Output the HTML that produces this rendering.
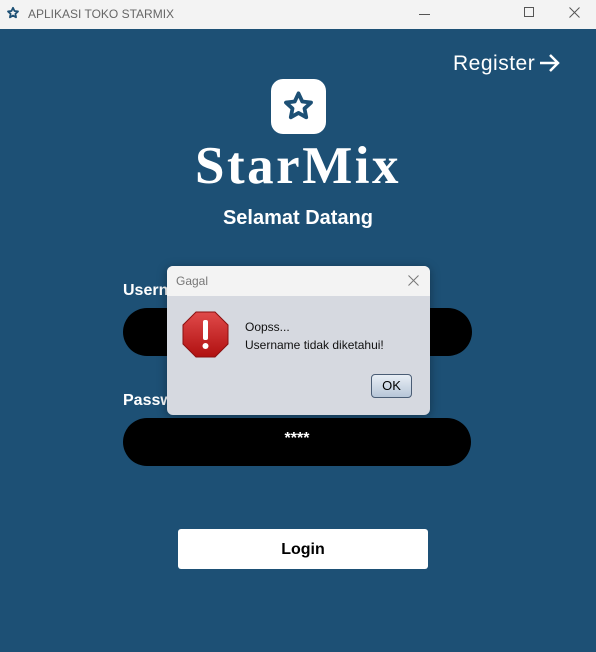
<!DOCTYPE html>
<html><head><meta charset="utf-8"><style>
*{margin:0;padding:0;box-sizing:border-box}
body{width:596px;height:652px;background:#1d5075;position:relative;overflow:hidden;font-family:"Liberation Sans",sans-serif}
.abs{position:absolute}
.tb{left:0;top:0;width:596px;height:29px;background:#f3f3f3}
</style></head><body>
<div class="abs tb"></div>
<svg class="abs" style="left:6px;top:6px" width="14" height="14" viewBox="0 0 24 24"><path d="M12 3l2.6 5.6 6 .7-4.5 4.1 1.2 6-5.3-3-5.3 3 1.2-6L3.4 9.3l6-.7z" fill="none" stroke="#1d5075" stroke-width="3" stroke-linejoin="round"/></svg>
<div class="abs" style="left:28px;top:7px;font-size:12px;color:#666">APLIKASI TOKO STARMIX</div>
<div class="abs" style="left:419px;top:14px;width:11px;height:1px;background:#555"></div>
<div class="abs" style="left:524px;top:7px;width:10px;height:10px;border:1px solid #555"></div>
<svg class="abs" style="left:569px;top:7px" width="11" height="11" viewBox="0 0 11 11"><path d="M0.5 0.5l10 10M10.5 0.5l-10 10" stroke="#555" stroke-width="1"/></svg>

<div class="abs" style="left:453px;top:52px;font-size:21px;color:#fff;letter-spacing:0.5px">Register</div>
<svg class="abs" style="left:539px;top:53px" width="22" height="20" viewBox="0 0 22 20"><path d="M1 10h18M11 2l8 8-8 8" fill="none" stroke="#fff" stroke-width="2.5"/></svg>

<div class="abs" style="left:271px;top:79px;width:55px;height:55px;background:#fff;border-radius:12px"></div>
<svg class="abs" style="left:281px;top:89px" width="35" height="35" viewBox="0 0 24 24"><path d="M12 3l2.6 5.6 6 .7-4.5 4.1 1.2 6-5.3-3-5.3 3 1.2-6L3.4 9.3l6-.7z" fill="none" stroke="#1d5075" stroke-width="2.6" stroke-linejoin="round"/></svg>

<div class="abs" style="left:0;width:596px;top:136px;text-align:center;font-family:'Liberation Serif',serif;font-weight:bold;font-size:53px;color:#fff;letter-spacing:2.5px">StarMix</div>
<div class="abs" style="left:0;width:596px;top:207px;text-align:center;font-weight:bold;font-size:20px;color:#fff">Selamat Datang</div>

<div class="abs" style="left:123px;top:282px;font-size:16px;color:#fff;font-weight:bold">Username</div>
<div class="abs" style="left:123px;top:308px;width:349px;height:48px;background:#000;border-radius:24px"></div>
<div class="abs" style="left:123px;top:392px;font-size:16px;color:#fff;font-weight:bold">Password</div>
<div class="abs" style="left:123px;top:418px;width:348px;height:48px;background:#000;border-radius:24px;color:#fff;text-align:center;font-size:16px;font-weight:bold;line-height:42px">****</div>

<div class="abs" style="left:178px;top:529px;width:250px;height:40px;background:#fff;border-radius:3px;text-align:center;line-height:41px;font-size:16px;font-weight:bold;color:#000">Login</div>

<div class="abs" style="left:167px;top:266px;width:263px;height:149px;background:#d6d9e0;border-radius:6px;overflow:hidden;box-shadow:0 2px 10px rgba(0,0,0,0.35)">
<div style="height:30px;background:#f3f3f3;font-size:12px;color:#777;padding:8px 0 0 9px">Gagal</div>
<svg class="abs" style="left:241px;top:9px" width="11" height="11" viewBox="0 0 11 11"><path d="M0.5 0.5l10 10M10.5 0.5l-10 10" stroke="#777" stroke-width="1"/></svg>
<svg class="abs" style="left:15px;top:45px" width="47" height="47" viewBox="0 0 47 47"><defs><linearGradient id="g" x1="0" y1="0" x2="0" y2="1"><stop offset="0" stop-color="#e04a4a"/><stop offset="1" stop-color="#b01010"/></linearGradient></defs><polygon points="14,1 33,1 46,14 46,33 33,46 14,46 1,33 1,14" fill="url(#g)" stroke="#8a1010"/><rect x="21" y="9" width="5" height="20" rx="2" fill="#fff"/><circle cx="23.5" cy="35" r="3" fill="#fff"/></svg>
<div class="abs" style="left:78px;top:52px;font-size:12px;color:#111;line-height:18px">Oopss...<br>Username tidak diketahui!</div>
<div class="abs" style="left:204px;top:108px;width:41px;height:24px;border:1px solid #4a5d75;border-radius:4px;background:linear-gradient(#e8eef5,#b7c6d8);text-align:center;line-height:22px;font-size:13px;color:#000">OK</div>
</div>
</body></html>
